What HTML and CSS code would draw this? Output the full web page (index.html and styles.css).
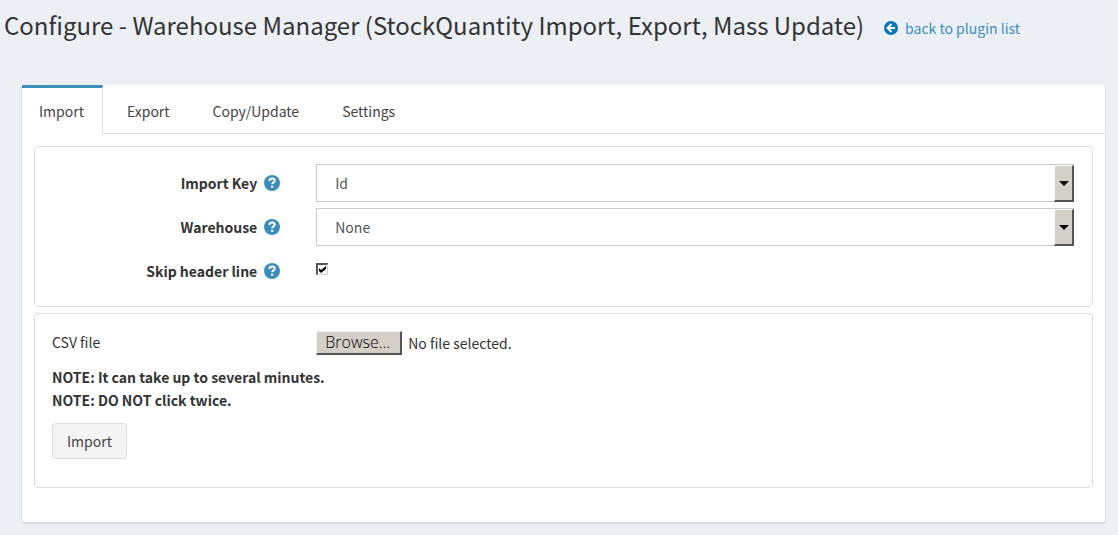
FILE: index.html
```html
<!DOCTYPE html>
<html lang="en">
<head>
    <meta charset="UTF-8">
    <meta name="viewport" content="width=device-width, initial-scale=1.0">
    <title>Configure - Warehouse Manager</title>
    <link rel="stylesheet" href="styles.css">
</head>
<body>
    <header class="content-header">
        <h1>Configure - Warehouse Manager (StockQuantity Import, Export, Mass Update)</h1>
        <a class="back-link" href="#">
            <svg class="back-icon" viewBox="0 0 16 16" aria-hidden="true">
                <circle cx="8" cy="8" r="8" fill="#0b74b8"/>
                <path d="M8.6 3.4L4 8l4.6 4.6M4.4 8h8.2" fill="none" stroke="#fff" stroke-width="2.2"/>
            </svg>
            <span>back to plugin list</span>
        </a>
    </header>

    <main class="tabs-panel">
        <nav class="tabs">
            <a class="tab active" href="#import">Import</a>
            <a class="tab" href="#export">Export</a>
            <a class="tab" href="#copy">Copy/Update</a>
            <a class="tab" href="#settings">Settings</a>
        </nav>

        <form class="tab-content" id="import">
            <!-- Import options -->
            <section class="panel options-panel">
                <div class="form-row">
                    <div class="label-col">
                        <label for="importKey">Import Key</label>
                        <svg class="help-icon" viewBox="0 0 16 16" aria-hidden="true">
                            <circle cx="8" cy="8" r="8" fill="#3c8dbc"/>
                            <path d="M5.4 6c.1-1.7 1.2-2.5 2.7-2.5s2.6.9 2.6 2.2c0 1.7-2.5 1.7-2.5 3.6" fill="none" stroke="#fff" stroke-width="2"/>
                            <path d="M7.1 10.7h2.2v2.1H7.1z" fill="#fff"/>
                        </svg>
                    </div>
                    <div class="field-col">
                        <div class="select-box">
                            <select id="importKey">
                                <option>Id</option>
                            </select>
                            <span class="select-arrow"></span>
                        </div>
                    </div>
                </div>
                <div class="form-row">
                    <div class="label-col">
                        <label for="warehouse">Warehouse</label>
                        <svg class="help-icon" viewBox="0 0 16 16" aria-hidden="true">
                            <circle cx="8" cy="8" r="8" fill="#3c8dbc"/>
                            <path d="M5.4 6c.1-1.7 1.2-2.5 2.7-2.5s2.6.9 2.6 2.2c0 1.7-2.5 1.7-2.5 3.6" fill="none" stroke="#fff" stroke-width="2"/>
                            <path d="M7.1 10.7h2.2v2.1H7.1z" fill="#fff"/>
                        </svg>
                    </div>
                    <div class="field-col">
                        <div class="select-box">
                            <select id="warehouse">
                                <option>None</option>
                            </select>
                            <span class="select-arrow"></span>
                        </div>
                    </div>
                </div>
                <div class="form-row">
                    <div class="label-col">
                        <label for="skipHeader">Skip header line</label>
                        <svg class="help-icon" viewBox="0 0 16 16" aria-hidden="true">
                            <circle cx="8" cy="8" r="8" fill="#3c8dbc"/>
                            <path d="M5.4 6c.1-1.7 1.2-2.5 2.7-2.5s2.6.9 2.6 2.2c0 1.7-2.5 1.7-2.5 3.6" fill="none" stroke="#fff" stroke-width="2"/>
                            <path d="M7.1 10.7h2.2v2.1H7.1z" fill="#fff"/>
                        </svg>
                    </div>
                    <div class="field-col check-col">
                        <span class="check-box">
                            <input type="checkbox" id="skipHeader" checked>
                            <svg class="check-mark" viewBox="0 0 7 7" aria-hidden="true">
                                <path d="M0 2l2 2 5-4v3L2 7 0 5z"/>
                            </svg>
                        </span>
                    </div>
                </div>
            </section>

            <!-- File upload -->
            <section class="panel">
                <div class="form-row file-row">
                    <div class="text-col">
                        <label for="csvFile">CSV file</label>
                    </div>
                    <div class="field-col file-col">
                        <input class="file-input" type="file" id="csvFile">
                        <label class="browse" for="csvFile">Browse...</label>
                        <span>No file selected.</span>
                    </div>
                </div>
                <div class="notes">
                    <p>NOTE: It can take up to several minutes.</p>
                    <p>NOTE: DO NOT click twice.</p>
                    <button type="button" class="btn">Import</button>
                </div>
            </section>
        </form>
    </main>
</body>
</html>
```
FILE: styles.css
```css
* {
    box-sizing: border-box;
}

body {
    margin: 0;
    padding: 7px 12px 12px 4px;
    background-color: #ecf0f5;
    color: #333;
    font-family: "Noto Sans CJK SC", "Open Sans", sans-serif;
    font-size: 14px;
    line-height: 23px;
}

.content-header {
    display: flex;
    align-items: baseline;
    gap: 20px;
    margin-bottom: 42px;
}

h1 {
    margin: 0;
    font-size: 24px;
    font-weight: 400;
    line-height: 36px;
}

.back-link {
    display: flex;
    align-items: center;
    gap: 7px;
    color: #3c8dbc;
    text-decoration: none;
}

.back-icon {
    width: 14px;
    height: 14px;
}

.tabs-panel {
    margin-left: 17px;
    border: 1px solid #dce1e7;
    border-top: none;
    border-radius: 3px;
    background-color: #fff;
    box-shadow: 0 1px 1px rgba(0, 0, 0, 0.1);
}

/* Tabs */
.tabs {
    display: flex;
    gap: 7px;
    border-bottom: 1px solid #ddd;
}

.tab {
    padding: 12px 18px 10px 17px;
    border-top: 3px solid transparent;
    border-right: 1px solid transparent;
    color: #444;
    text-decoration: none;
}

.tab.active {
    margin-bottom: -1px;
    padding-bottom: 11px;
    border-top-color: #3c8dbc;
    border-right-color: #ddd;
    background-color: #fff;
}

.tab-content {
    display: flex;
    flex-direction: column;
    gap: 6px;
    padding: 12px 12px 34px;
}

.panel {
    padding: 17px 2px 28px;
    border: 1px solid #ddd;
    border-radius: 4px;
}

.options-panel {
    padding-bottom: 16px;
}

/* Form rows */
.form-row {
    display: grid;
    grid-template-columns: 1fr 3fr;
    min-height: 38px;
}

.form-row + .form-row {
    margin-top: 6px;
}

.label-col {
    display: flex;
    align-items: center;
    justify-content: flex-end;
    gap: 7px;
    padding-right: 20px;
    font-weight: 700;
}

.help-icon {
    width: 16px;
    height: 16px;
}

.text-col {
    padding: 0 15px;
}

.field-col {
    padding: 0 16px;
}

.select-box {
    position: relative;
}

select {
    display: block;
    width: 100%;
    height: 38px;
    padding: 0 18px;
    border: 1px solid #ccc;
    border-radius: 0;
    background-color: #fff;
    color: #555;
    font: inherit;
    appearance: none;
}

.select-arrow {
    position: absolute;
    top: 1px;
    right: 0;
    bottom: 0;
    display: flex;
    align-items: center;
    justify-content: center;
    width: 20px;
    border: 1px solid #fff;
    border-right: 2px solid #555;
    border-bottom: 2px solid #555;
    background-color: #d4d0c8;
    pointer-events: none;
}

.select-arrow::after {
    content: "";
    border: 5px solid transparent;
    border-top-color: #000;
    border-bottom: none;
}

.check-col {
    padding-top: 11px;
}

.check-box {
    position: relative;
    display: block;
    width: 12px;
    height: 12px;
}

.check-box input {
    display: block;
    width: 12px;
    height: 12px;
    margin: 0;
    border: 1px solid #d4d0c8;
    border-top: 2px solid #555;
    border-left: 2px solid #555;
    background-color: #fff;
    appearance: none;
}

.check-mark {
    position: absolute;
    top: 3px;
    left: 3px;
    display: none;
    width: 7px;
    height: 7px;
    pointer-events: none;
}

.check-box input:checked + .check-mark {
    display: block;
}

/* File upload */
.file-row {
    min-height: 24px;
}

.file-col {
    position: relative;
    display: flex;
    align-items: center;
    gap: 6px;
}

.file-input {
    position: absolute;
    width: 86px;
    height: 24px;
    opacity: 0;
}

.browse {
    padding: 0 10px 0 8px;
    border: 1px solid #eee;
    border-right: 2px solid #555;
    border-bottom: 2px solid #555;
    background-color: #d4d0c8;
    color: #000;
    font-family: "Open Sans", sans-serif;
    font-size: 16px;
    font-weight: 300;
    line-height: 21px;
}

.notes {
    padding: 11px 15px 0;
}

.notes p {
    margin: 0;
    font-weight: 700;
}

.btn {
    height: 36px;
    margin-top: 11px;
    padding: 0 14px;
    border: 1px solid #ddd;
    border-radius: 4px;
    background-color: #f4f4f4;
    color: #444;
    font: inherit;
}
```
